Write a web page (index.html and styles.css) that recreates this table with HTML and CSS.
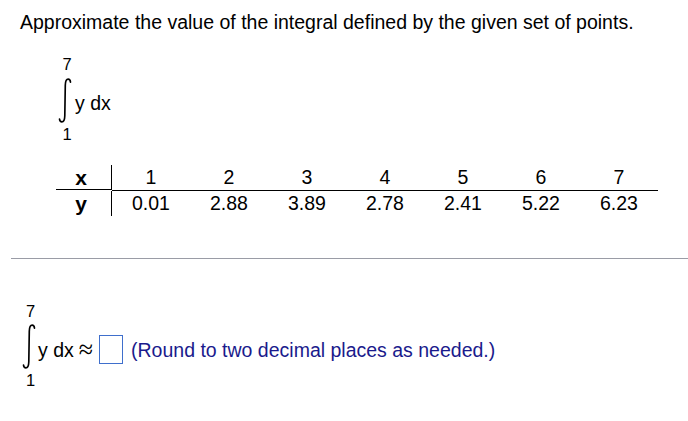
FILE: index.html
```html
<!DOCTYPE html>
<html>
<head>
<meta charset="utf-8">
<link rel="stylesheet" href="styles.css">
</head>
<body>
<div class="page">
  <p class="title">Approximate the value of the integral defined by the given set of points.</p>

  <div class="integral integral-top">
    <div class="lim">7</div>
    <div class="row">
      <svg class="sign" width="14" height="45" viewBox="0 0 14 46">
        <path d="M12.6 4.2 C12.4 2.2 11.4 1.2 10.2 1.2 C8 1.2 7.4 3.6 7.3 7.5 L6.8 38.5 C6.7 42.6 6.1 44.8 3.8 44.8 C2.6 44.8 1.6 43.9 1.4 42" fill="none" stroke="#000" stroke-width="1.7" stroke-linecap="round"/>
      </svg>
      <span class="expr">y dx</span>
    </div>
    <div class="lim">1</div>
  </div>

  <div class="table">
    <div class="cell head">x</div>
    <div class="cell">1</div>
    <div class="cell">2</div>
    <div class="cell">3</div>
    <div class="cell">4</div>
    <div class="cell">5</div>
    <div class="cell">6</div>
    <div class="cell">7</div>
    <div class="cell head">y</div>
    <div class="cell">0.01</div>
    <div class="cell">2.88</div>
    <div class="cell">3.89</div>
    <div class="cell">2.78</div>
    <div class="cell">2.41</div>
    <div class="cell">5.22</div>
    <div class="cell">6.23</div>
  </div>

  <div class="divider"></div>

  <div class="integral integral-bottom">
    <div class="lim">7</div>
    <div class="row">
      <svg class="sign" width="14" height="45" viewBox="0 0 14 46">
        <path d="M12.6 4.2 C12.4 2.2 11.4 1.2 10.2 1.2 C8 1.2 7.4 3.6 7.3 7.5 L6.8 38.5 C6.7 42.6 6.1 44.8 3.8 44.8 C2.6 44.8 1.6 43.9 1.4 42" fill="none" stroke="#000" stroke-width="1.7" stroke-linecap="round"/>
      </svg>
      <span class="expr">y dx</span>
      <span class="approx">≈</span>
      <span class="answer"></span>
      <span class="hint">(Round to two decimal places as needed.)</span>
    </div>
    <div class="lim">1</div>
  </div>
</div>
</body>
</html>
```

FILE: styles.css
```css
html, body {
  margin: 0;
  padding: 0;
  background: #fff;
}

.page {
  width: 688px;
  font-family: "Liberation Sans", Arial, sans-serif;
  font-size: 19.5px;
  line-height: 22px;
  color: #000;
}

.title {
  margin: 11px 0 0 20px;
}

.integral {
  display: grid;
  grid-template-columns: 14px auto;
}

.integral-top {
  margin: 22px 0 0 58px;
}

.integral-bottom {
  margin: 43px 0 0 22px;
}

.lim {
  grid-column: 1;
  justify-self: center;
  padding-left: 4px;
  font-size: 16.5px;
  line-height: 19px;
}

.integral-bottom .lim {
  padding-left: 3px;
}

.row {
  grid-column: 1 / span 2;
  display: flex;
  align-items: flex-start;
  height: 51px;
}

.integral-bottom .row {
  height: 50px;
}

.sign {
  margin-top: 4px;
  flex: none;
}

.integral-bottom .sign {
  margin-top: 3px;
}

.expr {
  margin: 18px 0 0 3px;
}

.integral-bottom .expr {
  margin-left: 2px;
}

.approx {
  margin: 18px 0 0 5px;
  font-family: "Liberation Serif", "Times New Roman", serif;
  font-size: 26px;
  line-height: 22px;
}

.answer {
  margin: 14px 0 0 6px;
  width: 24px;
  height: 29px;
  box-sizing: border-box;
  border: 1px solid #3f6fcc;
  flex: none;
}

.hint {
  margin: 18px 0 0 8px;
  color: #1a1a8c;
  white-space: nowrap;
}

.table {
  margin: 21px 0 0 56px;
  display: grid;
  grid-template-columns: 56px repeat(7, 78px);
  width: 601px;
}

.cell {
  height: 25px;
  line-height: 25px;
  text-align: center;
}

.cell:nth-child(-n+8) {
  border-bottom: 1px solid #000;
}

.head {
  font-weight: bold;
  font-size: 21px;
  border-right: 1px solid #000;
  padding-right: 5px;
  box-sizing: border-box;
}

.divider {
  margin: 42px 0 0 11px;
  border-top: 1px solid #9a9ca6;
}
```
